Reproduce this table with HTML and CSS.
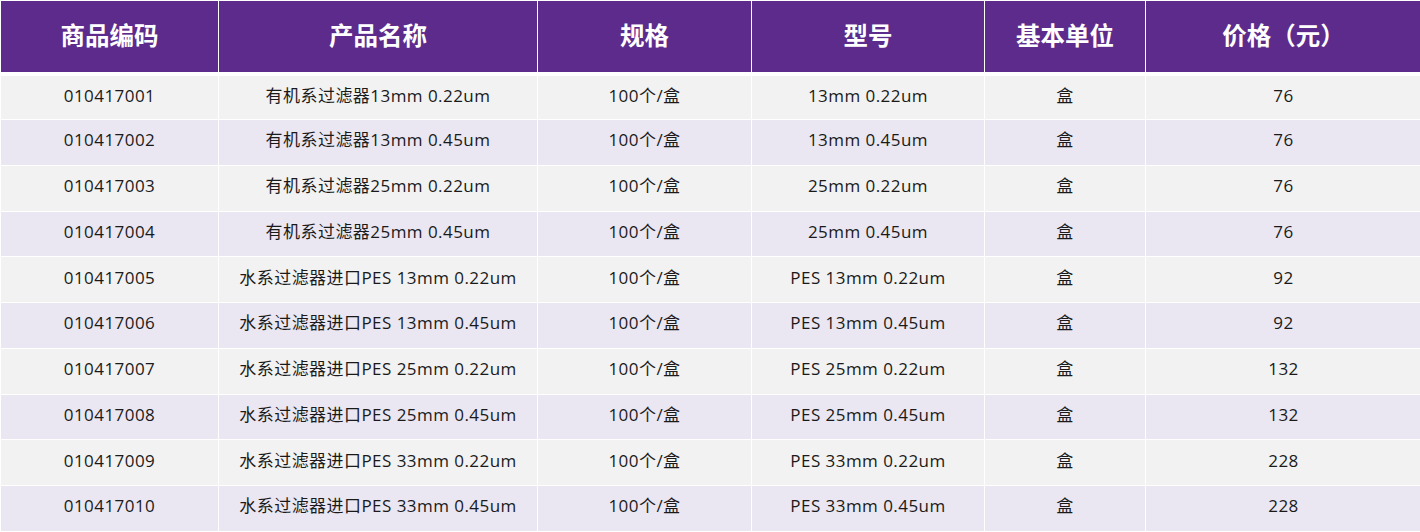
FILE: index.html
```html
<!DOCTYPE html>
<html lang="zh-CN">
<head>
<meta charset="utf-8">
<title>过滤器价格表</title>
<link rel="stylesheet" href="styles.css">
</head>
<body>
<table class="price-table">
  <colgroup>
    <col class="c1"><col class="c2"><col class="c3"><col class="c4"><col class="c5"><col class="c6">
  </colgroup>
  <thead>
    <tr><th>商品编码</th><th>产品名称</th><th>规格</th><th>型号</th><th>基本单位</th><th>价格（元）</th></tr>
  </thead>
  <tbody>
    <tr class="first"><td>010417001</td><td>有机系过滤器13mm 0.22um</td><td>100个/盒</td><td>13mm 0.22um</td><td>盒</td><td>76</td></tr>
    <tr><td>010417002</td><td>有机系过滤器13mm 0.45um</td><td>100个/盒</td><td>13mm 0.45um</td><td>盒</td><td>76</td></tr>
    <tr><td>010417003</td><td>有机系过滤器25mm 0.22um</td><td>100个/盒</td><td>25mm 0.22um</td><td>盒</td><td>76</td></tr>
    <tr><td>010417004</td><td>有机系过滤器25mm 0.45um</td><td>100个/盒</td><td>25mm 0.45um</td><td>盒</td><td>76</td></tr>
    <tr><td>010417005</td><td>水系过滤器进口PES 13mm 0.22um</td><td>100个/盒</td><td>PES 13mm 0.22um</td><td>盒</td><td>92</td></tr>
    <tr><td>010417006</td><td>水系过滤器进口PES 13mm 0.45um</td><td>100个/盒</td><td>PES 13mm 0.45um</td><td>盒</td><td>92</td></tr>
    <tr><td>010417007</td><td>水系过滤器进口PES 25mm 0.22um</td><td>100个/盒</td><td>PES 25mm 0.22um</td><td>盒</td><td>132</td></tr>
    <tr><td>010417008</td><td>水系过滤器进口PES 25mm 0.45um</td><td>100个/盒</td><td>PES 25mm 0.45um</td><td>盒</td><td>132</td></tr>
    <tr><td>010417009</td><td>水系过滤器进口PES 33mm 0.22um</td><td>100个/盒</td><td>PES 33mm 0.22um</td><td>盒</td><td>228</td></tr>
    <tr><td>010417010</td><td>水系过滤器进口PES 33mm 0.45um</td><td>100个/盒</td><td>PES 33mm 0.45um</td><td>盒</td><td>228</td></tr>
  </tbody>
</table>
</body>
</html>
```
FILE: styles.css
```css
html, body {
  margin: 0;
  padding: 0;
  background: #ffffff;
}

.price-table {
  border-collapse: separate;
  border-spacing: 1px;
  table-layout: fixed;
  width: 1421px;
  font-family: "Open Sans", "Noto Sans CJK SC", sans-serif;
  color: #1a1a1a;
}

.c1 { width: 217px; }
.c2 { width: 318px; }
.c3 { width: 213px; }
.c4 { width: 232px; }
.c5 { width: 160px; }
.c6 { width: 275px; }

.price-table th,
.price-table td {
  padding: 0;
  text-align: center;
  vertical-align: middle;
}

.price-table th {
  height: 69px;
  padding-bottom: 2px;
  background: #5c2b8c;
  background-clip: padding-box;
  border-bottom: 3px solid #ffffff;
  color: #ffffff;
  font-family: "Noto Sans CJK SC", sans-serif;
  font-weight: 700;
  font-size: 24.5px;
  line-height: 1;
}

.price-table td {
  height: 44.75px;
  font-size: 17px;
  letter-spacing: 0.45px;
  line-height: 1;
  padding-bottom: 5px;
  box-sizing: border-box;
}

.price-table tr.first td {
  height: 43px;
}

.price-table tbody tr:nth-child(odd) td {
  background: #f2f2f2;
}

.price-table tbody tr:nth-child(even) td {
  background: #eae7f2;
}
```
